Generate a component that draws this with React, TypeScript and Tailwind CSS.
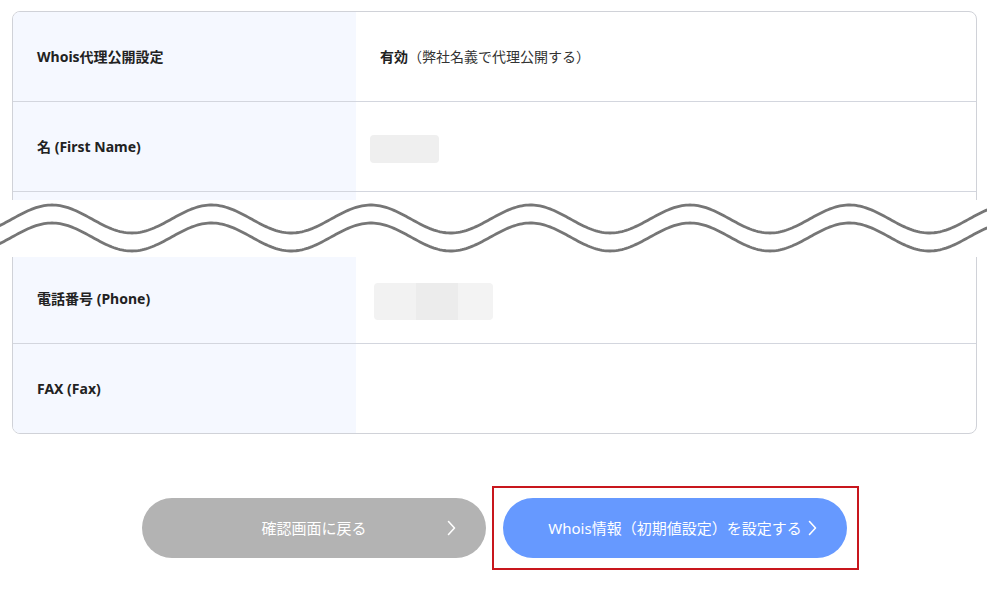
import React from "react";

const FONT = { fontFamily: '"Noto Sans", "Noto Sans CJK JP", sans-serif' };

function wavePath(center: number, amp: number, period: number, peakX: number, width: number) {
  const pts: string[] = [];
  for (let x = -4; x <= width + 4; x += 2) {
    const y = center - amp * Math.cos(((x - peakX) / period) * Math.PI * 2);
    pts.push(`${x === -4 ? "M" : "L"}${x},${y.toFixed(2)}`);
  }
  return pts.join(" ");
}

function Chevron() {
  return (
    <svg width="9" height="16" viewBox="0 0 9 16" className="absolute right-[30px] top-1/2 -translate-y-1/2">
      <polyline points="1.5,1.5 7.5,8 1.5,14.5" fill="none" stroke="white" strokeWidth="1.6" strokeLinecap="round" strokeLinejoin="round" />
    </svg>
  );
}

function Row({ label, children, last }: { label: string; children?: React.ReactNode; last?: boolean }) {
  return (
    <div className={`flex ${last ? "h-[89px]" : "h-[90px] border-b border-[#d3d6de]"}`}>
      <div className="flex w-[343px] shrink-0 items-center bg-[#f5f8ff] pl-[24px] text-[14px] font-bold text-[#222]">
        {label}
      </div>
      <div className="flex flex-1 items-center">{children}</div>
    </div>
  );
}

export default function App() {
  return (
    <div className="relative h-[595px] w-[987px] bg-white" style={FONT}>
      <div className="pt-[11px] pl-[12px]">
        <div className="w-[965px] overflow-hidden rounded-[8px] border border-[#d0d2d8]">
          <Row label="Whois代理公開設定">
            <span className="pl-[24px] text-[14px] text-[#333]">
              <b className="font-bold text-[#222]">有効</b>（弊社名義で代理公開する）
            </span>
          </Row>
          <Row label="名 (First Name)">
            <div className="ml-[14px] mt-[4px] h-[28px] w-[69px] rounded-[4px] bg-[#efefef]" />
          </Row>
          <div className="flex h-[62px] border-b border-[#d3d6de]">
            <div className="w-[343px] bg-[#f5f8ff]" />
          </div>
          <Row label="電話番号 (Phone)">
            <div className="ml-[18px] mt-[6px] flex h-[37px] w-[119px] overflow-hidden rounded-[4px]">
              <div className="w-[42px] bg-[#f2f2f2]" />
              <div className="w-[42px] bg-[#ececec]" />
              <div className="flex-1 bg-[#f3f3f3]" />
            </div>
          </Row>
          <Row label="FAX (Fax)" last />
        </div>
      </div>

      {/* break marker over the table */}
      <div className="absolute left-0 top-[200px] h-[57px] w-full bg-white">
        <svg width="987" height="57" viewBox="0 0 987 57">
          <path d={wavePath(19, 14, 159.5, 52, 987)} fill="none" stroke="#767676" strokeWidth="2.8" />
          <path d={wavePath(37, 14, 159.5, 52, 987)} fill="none" stroke="#767676" strokeWidth="2.8" />
        </svg>
      </div>

      <div className="mt-[52px] flex items-center justify-center gap-[6px] pl-[14px]">
        <button className="relative flex h-[60px] w-[344px] items-center justify-center rounded-full bg-[#b3b3b3] text-[15px] text-white" style={FONT}>
          確認画面に戻る
          <Chevron />
        </button>
        <div className="border-2 border-[#c8161d] py-[10px] pl-[9px] pr-[10px]">
          <button className="relative flex h-[60px] w-[344px] items-center justify-center rounded-full bg-[#6699ff] text-[15px] text-white" style={FONT}>
            Whois情報（初期値設定）を設定する
            <Chevron />
          </button>
        </div>
      </div>
    </div>
  );
}
